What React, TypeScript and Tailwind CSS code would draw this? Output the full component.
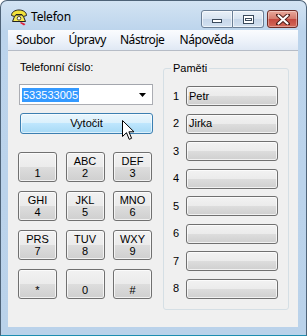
import React from "react";

const btnBg =
  "bg-[linear-gradient(to_bottom,#f2f2f2_0%,#ebebeb_50%,#dddddd_50%,#cfcfcf_100%)]";

function KeyBtn({ top, bottom }: { top: string; bottom: string }) {
  return (
    <div
      className={`h-[30px] w-[39px] rounded-[3px] border border-[#707070] ${btnBg} shadow-[inset_0_0_0_1px_rgba(255,255,255,0.7)] flex flex-col items-center justify-center text-[11px] leading-[12px] text-black`}
    >
      <span>{top || "\u00a0"}</span>
      <span>{bottom}</span>
    </div>
  );
}

function MemRow({ n, label }: { n: number; label: string }) {
  return (
    <div className="flex items-center h-[20px]">
      <span className="w-[13px] text-[11px] leading-[13px] text-black">{n}</span>
      <div
        className={`h-[20px] w-[92px] rounded-[3px] border border-[#707070] ${btnBg} shadow-[inset_0_0_0_1px_rgba(255,255,255,0.7)] flex items-center pl-[2px] text-[11px] text-black`}
      >
        {label}
      </div>
    </div>
  );
}

function PhoneIcon() {
  return (
    <svg width="18" height="17" viewBox="0 0 18 17">
      <path
        d="M1.5 6.5 C1.5 3 5 1 9 1 C13 1 16.5 3 16.5 6.5 L13.5 7.5 L12 5.5 L6 5.5 L4.5 7.5 Z"
        fill="#f3e23a"
        stroke="#222"
        strokeWidth="1"
      />
      <path
        d="M4.5 7.5 L6.5 6 L11.5 6 L13.5 7.5 L15.5 12.5 L2.5 12.5 Z"
        fill="#f7ea55"
        stroke="#222"
        strokeWidth="1"
      />
      <circle cx="9" cy="9.3" r="1.8" fill="#fff" stroke="#222" strokeWidth="0.8" />
      <path d="M11 13 L15.5 15 L14 16.5 L10 14 Z" fill="#e0203a" />
    </svg>
  );
}

export default function App() {
  const keys: [string, string][] = [
    ["", "1"],
    ["ABC", "2"],
    ["DEF", "3"],
    ["GHI", "4"],
    ["JKL", "5"],
    ["MNO", "6"],
    ["PRS", "7"],
    ["TUV", "8"],
    ["WXY", "9"],
    ["", "*"],
    ["", "0"],
    ["", "#"],
  ];
  return (
    <div className="w-[307px] h-[336px] relative">
      <div
        className="w-[307px] h-[336px] rounded-t-[7px] border border-[#4e6378] border-b-[#1d8db0] bg-[linear-gradient(to_bottom,#d3e3f3_0px,#bcd4ec_30px,#bad2ea_100%)] flex flex-col"
        style={{ fontFamily: '"Liberation Sans", Arial, sans-serif' }}
      >
        {/* title bar */}
        <div className="h-[29px] flex items-start relative">
          <div className="absolute left-[9px] top-[8px]">
            <PhoneIcon />
          </div>
          <span
            className="absolute left-[30px] top-[8px] text-[12px] leading-[16px] text-black tracking-[-0.2px]"
            style={{ fontFamily: '"Noto Sans", "Open Sans", sans-serif' }}
          >
            Telefon
          </span>
          <div className="absolute right-[8px] top-[9px] flex items-start">
            <div className="h-[18px] w-[32px] rounded-l-[3px] border border-[#6b7f96] bg-[linear-gradient(to_bottom,#e9f0f8_0%,#d7e3f0_50%,#c6d6e9_50%,#d3e1f0_100%)] shadow-[inset_0_0_0_1px_rgba(255,255,255,0.6)] flex items-end justify-center pb-[4px]">
              <div className="w-[10px] h-[4px] bg-white border border-[#3a4a5c]" />
            </div>
            <div className="h-[18px] w-[31px] rounded-r-[3px] border border-l-0 border-[#6b7f96] bg-[linear-gradient(to_bottom,#e9f0f8_0%,#d7e3f0_50%,#c6d6e9_50%,#d3e1f0_100%)] shadow-[inset_0_0_0_1px_rgba(255,255,255,0.6)] flex items-center justify-center">
              <div className="w-[11px] h-[9px] border border-[#3a4a5c] bg-white flex items-center justify-center">
                <div className="w-[7px] h-[3px] border border-[#3a4a5c]" />
              </div>
            </div>
            <div className="ml-[3px] h-[18px] w-[31px] rounded-[3px] border border-[#6d2c27] bg-[linear-gradient(to_bottom,#e9a99c_0%,#d47a6c_50%,#c4483e_50%,#d36a5a_100%)] shadow-[inset_0_0_0_1px_rgba(255,255,255,0.35)] flex items-center justify-center">
              <svg width="14" height="11" viewBox="0 0 14 11">
                <path
                  d="M2 1 L12 10 M12 1 L2 10"
                  stroke="#4a1a16"
                  strokeWidth="4"
                  strokeLinecap="round"
                  fill="none"
                />
                <path
                  d="M2.5 1.5 L11.5 9.5 M11.5 1.5 L2.5 9.5"
                  stroke="#ffffff"
                  strokeWidth="2.2"
                  strokeLinecap="round"
                  fill="none"
                />
              </svg>
            </div>
          </div>
        </div>

        {/* inner area */}
        <div className="ml-[7px] w-[290px] flex flex-col">
          {/* menu bar */}
          <div
            className="h-[20px] bg-[linear-gradient(to_bottom,#fbfcfe_0%,#eef3fa_50%,#dfe8f4_100%)] flex items-center text-[12px] text-black tracking-[-0.4px]"
            style={{ fontFamily: '"Noto Sans", "Open Sans", sans-serif' }}
          >
            <span className="ml-[8px]">Soubor</span>
            <span className="ml-[14px]">Úpravy</span>
            <span className="ml-[14px]">Nástroje</span>
            <span className="ml-[15px]">Nápověda</span>
          </div>
          <div className="h-[1px] bg-[#b6bcc6]" />

          {/* client */}
          <div className="h-[276px] bg-[#f0f0f0] flex relative">
            {/* left column */}
            <div className="pl-[10px] pt-[9px] flex flex-col w-[155px]">
              <div className="ml-[2px] h-[14px] text-[11px] leading-[14px] text-black">
                Telefonní číslo:
              </div>
              <div className="mt-[10px] ml-[1px] h-[21px] w-[134px] bg-white border border-[#abadb3] border-t-[#a3a6ad] flex items-center relative">
                <span className="ml-[2px] px-[1px] h-[14px] leading-[14px] bg-[#3399ff] text-white text-[11px]">
                  533533005
                </span>
                <svg
                  className="absolute right-[6px] top-[8px]"
                  width="7"
                  height="4"
                  viewBox="0 0 7 4"
                >
                  <path d="M0 0 L7 0 L3.5 4 Z" fill="#000" />
                </svg>
              </div>
              <div className="mt-[8px] ml-[2px] h-[21px] w-[133px] rounded-[3px] border border-[#3c7fb1] bg-[linear-gradient(to_bottom,#eaf6fd_0%,#d9f0fc_50%,#bee6fd_50%,#a7d9f5_100%)] shadow-[inset_0_0_0_1px_rgba(255,255,255,0.6)] flex items-center justify-center text-[11px] text-black">
                Vytočit
              </div>
              <div className="mt-[18px] grid grid-cols-[39px_39px_39px] gap-x-[8.5px] gap-y-[9px]">
                {keys.map(([t, b], i) => (
                  <KeyBtn key={i} top={t} bottom={b} />
                ))}
              </div>
            </div>

            {/* group box */}
            <div className="mt-[17px] h-[242px] w-[126px] rounded-[3px] border border-[#d5dfe5] relative pt-[17px] pl-[9px] flex flex-col gap-[7.57px]">
              <span className="absolute left-[7px] top-[-8px] px-[2px] bg-[#f0f0f0] text-[11px] leading-[14px] text-black">
                Paměti
              </span>
              <MemRow n={1} label="Petr" />
              <MemRow n={2} label="Jirka" />
              <MemRow n={3} label="" />
              <MemRow n={4} label="" />
              <MemRow n={5} label="" />
              <MemRow n={6} label="" />
              <MemRow n={7} label="" />
              <MemRow n={8} label="" />
            </div>
          </div>
        </div>
      </div>

      {/* mouse cursor */}
      <svg
        className="absolute left-[122px] top-[120px]"
        width="13"
        height="21"
        viewBox="0 0 13 21"
      >
        <path
          d="M0.5 0.5 L0.5 16.5 L4.5 12.7 L7.2 19.3 L9.6 18.3 L6.9 11.8 L12 11.8 Z"
          fill="#fff"
          stroke="#000"
          strokeWidth="1"
          strokeLinejoin="miter"
        />
      </svg>
    </div>
  );
}
